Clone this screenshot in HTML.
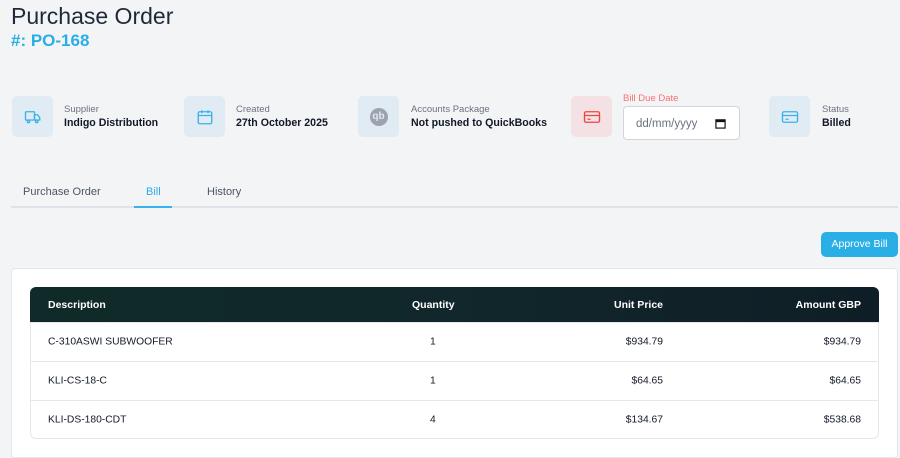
<!DOCTYPE html>
<html><head><style>
*{margin:0;padding:0;box-sizing:border-box}
body{width:900px;height:449px;overflow:hidden;background:#f3f4f6;font-family:"Liberation Sans",sans-serif;color:#111827;position:relative}
.a{position:absolute}
.ib{position:absolute;width:41px;height:41px;border-radius:5px;background:#e0ebf3;top:96px;display:flex;align-items:center;justify-content:center}
.lb{position:absolute;top:104px;font-size:9.5px;color:#6b7280}
.vl{position:absolute;top:117px;font-size:10.6px;font-weight:bold;color:#111827}
.tab{position:absolute;top:186px;font-size:11px;color:#4b5563}
.row{position:absolute;left:30px;width:849px;height:39px;border-top:1px solid #e5e7eb;font-size:10.3px}
.row span,.hd span{position:absolute;top:50%;transform:translateY(-50%)}
</style></head><body>
<div class="a" style="left:11px;top:3px;font-size:23px;color:#1f2937">Purchase Order</div>
<div class="a" style="left:11px;top:31px;font-size:17px;font-weight:bold;color:#29aee6">#: PO-168</div>

<div class="ib" style="left:12px"><svg width="18" height="18" viewBox="0 0 24 24" fill="none" stroke="#38b2ec" stroke-width="1.8"><rect x="2" y="5" width="12" height="11" rx="1"/><path d="M14 9h4l3 4v3h-7z"/><circle cx="6" cy="18" r="1.6"/><circle cx="17" cy="18" r="1.6"/></svg></div>
<div class="lb" style="left:64px">Supplier</div><div class="vl" style="left:64px">Indigo Distribution</div>

<div class="ib" style="left:184px"><svg width="18" height="18" viewBox="0 0 24 24" fill="none" stroke="#38b2ec" stroke-width="1.8"><rect x="3" y="5" width="18" height="16" rx="2"/><path d="M3 10h18M8 3v4M16 3v4"/></svg></div>
<div class="lb" style="left:236px">Created</div><div class="vl" style="left:236px">27th October 2025</div>

<div class="ib" style="left:358px"><div style="width:18px;height:18px;border-radius:50%;background:#9ca3af;color:#e0ebf3;font-size:10px;font-weight:bold;display:flex;align-items:center;justify-content:center">qb</div></div>
<div class="lb" style="left:411px">Accounts Package</div><div class="vl" style="left:411px">Not pushed to QuickBooks</div>

<div class="ib" style="left:571px;background:#f4e1e4"><svg width="18" height="18" viewBox="0 0 24 24" fill="none" stroke="#ef4444" stroke-width="1.8"><rect x="2" y="5" width="20" height="14" rx="2"/><path d="M2 10h20M6 15h4"/></svg></div>
<div class="a" style="left:623px;top:93px;font-size:9.5px;color:#f87171">Bill Due Date</div>
<div class="a" style="left:623px;top:106px;width:117px;height:34px;background:#fff;border:1px solid #d1d5db;border-radius:4px;font-size:11.5px;color:#6b7280;padding:11px 0 0 12px">dd/mm/yyyy<svg class="a" style="left:91px;top:11px" width="11" height="11" viewBox="0 0 12 12"><rect x="1" y="2" width="10" height="9" fill="none" stroke="#111" stroke-width="1.3"/><rect x="1" y="2" width="10" height="2.5" fill="#111"/></svg></div>

<div class="ib" style="left:769px"><svg width="18" height="18" viewBox="0 0 24 24" fill="none" stroke="#38b2ec" stroke-width="1.8"><rect x="2" y="5" width="20" height="14" rx="2"/><path d="M2 10h20M6 15h4"/></svg></div>
<div class="lb" style="left:822px">Status</div><div class="vl" style="left:822px">Billed</div>

<div class="tab" style="left:23px">Purchase Order</div>
<div class="tab" style="left:146px;color:#29aee6">Bill</div>
<div class="tab" style="left:207px">History</div>
<div class="a" style="left:11px;top:206px;width:887px;height:2px;background:#dfe2e6"></div>
<div class="a" style="left:134px;top:206px;width:38px;height:2px;background:#38b2ec"></div>

<div class="a" style="left:821px;top:232px;width:77px;height:25px;background:#29aee6;border-radius:5px;color:#fff;font-size:10.5px;text-align:center;line-height:25px">Approve Bill</div>

<div class="a" style="left:11px;top:268px;width:887px;height:190px;background:#fff;border:1px solid #e5e7eb;border-radius:4px"></div>
<div class="a" style="left:30px;top:287px;width:849px;height:152px;border:1px solid #e5e7eb;border-radius:6px"></div>
<div class="a hd" style="left:30px;top:287px;width:849px;height:35px;border-radius:6px 6px 0 0;background:linear-gradient(90deg,#0f2a28,#11272b 50%,#0f1e26);color:#fff;font-size:10.5px;font-weight:bold">
<span style="left:18px">Description</span><span style="left:382px">Quantity</span><span style="right:216px">Unit Price</span><span style="right:18px">Amount GBP</span></div>
<div class="row" style="top:322px"><span style="left:18px">C-310ASWI SUBWOOFER</span><span style="left:400px">1</span><span style="right:216px">$934.79</span><span style="right:18px">$934.79</span></div>
<div class="row" style="top:361px"><span style="left:18px">KLI-CS-18-C</span><span style="left:400px">1</span><span style="right:216px">$64.65</span><span style="right:18px">$64.65</span></div>
<div class="row" style="top:400px"><span style="left:18px">KLI-DS-180-CDT</span><span style="left:400px">4</span><span style="right:216px">$134.67</span><span style="right:18px">$538.68</span></div>
</body></html>
